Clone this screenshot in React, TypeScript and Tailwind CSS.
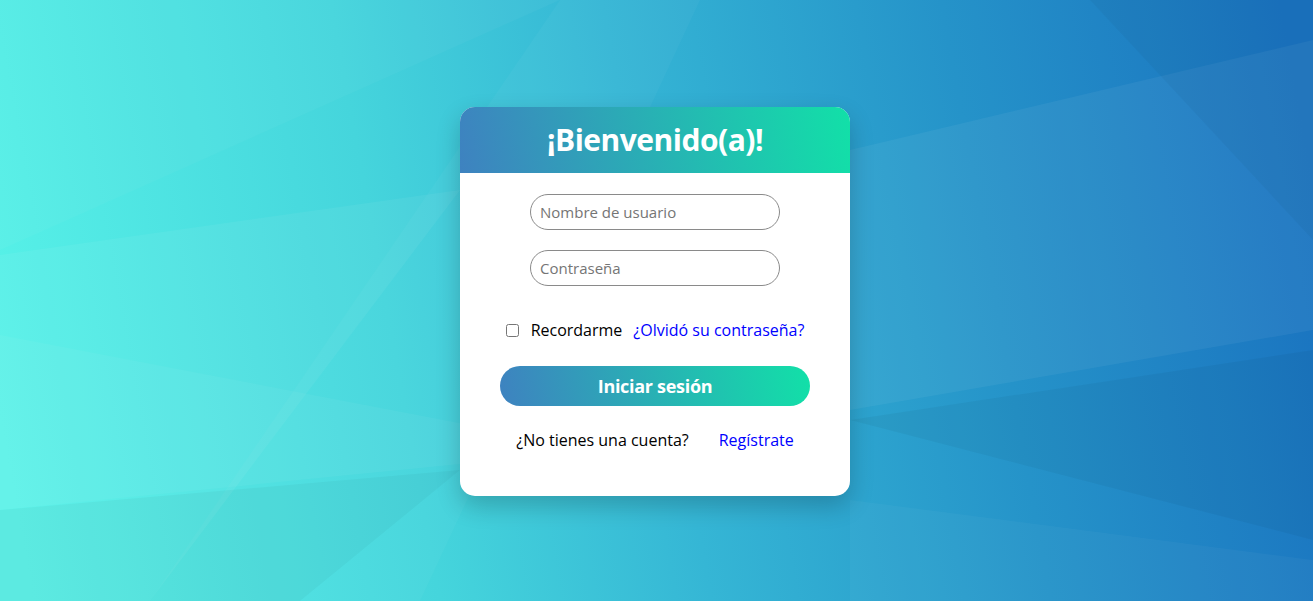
import React from "react";

function Background() {
  return (
    <svg
      className="absolute inset-0 w-full h-full"
      viewBox="0 0 1313 601"
      preserveAspectRatio="none"
    >
      <defs>
        <linearGradient id="bg" gradientUnits="userSpaceOnUse" x1="0" y1="420" x2="1313" y2="180">
          <stop offset="0" stopColor="#57f2e8" />
          <stop offset="0.3" stopColor="#45d5dc" />
          <stop offset="0.5" stopColor="#35b6d5" />
          <stop offset="0.75" stopColor="#2593c9" />
          <stop offset="1" stopColor="#1a73c0" />
        </linearGradient>
      </defs>
      <rect x="0" y="0" width="1313" height="601" fill="url(#bg)" />
      <polygon points="0,0 560,0 0,250" fill="#ffffff" opacity="0.03" />
      <polygon points="0,255 460,190 150,601 0,601" fill="#ffffff" opacity="0.05" />
      <polygon points="0,335 600,450 0,510" fill="#ffffff" opacity="0.04" />
      <polygon points="560,0 700,0 420,601 150,601" fill="#ffffff" opacity="0.03" />
      <polygon points="850,150 1313,40 1313,330 850,410" fill="#ffffff" opacity="0.05" />
      <polygon points="1090,0 1313,0 1313,240" fill="#000000" opacity="0.03" />
      <polygon points="850,420 1313,350 1313,540" fill="#000000" opacity="0.04" />
      <polygon points="0,510 460,470 300,601 0,601" fill="#000000" opacity="0.03" />
      <polygon points="850,500 1313,560 1313,601 850,601" fill="#ffffff" opacity="0.03" />
    </svg>
  );
}

export default function App() {
  return (
    <div
      className="relative w-full h-[601px] overflow-hidden flex justify-center pr-[3px]"
      style={{ fontFamily: '"Open Sans", "Noto Sans", sans-serif' }}
    >
      <Background />
      <div className="relative mt-[107px] w-[390px] h-[389px] bg-white rounded-[15px] overflow-hidden shadow-[0_10px_25px_rgba(0,0,0,0.2)] flex flex-col">
        <div className="h-[66px] bg-[linear-gradient(80deg,#3e82c0,#12e0a8)] flex items-center justify-center">
          <h1 className="text-white font-bold text-[30px] tracking-[-0.5px] leading-none">
            ¡Bienvenido(a)!
          </h1>
        </div>
        <div className="flex flex-col items-center pt-[21px]">
          <input
            className="w-[250px] h-[36px] rounded-full border border-[#8a8a8a] px-[9px] text-[15px] placeholder:text-[#757575] outline-none"
            placeholder="Nombre de usuario"
          />
          <input
            className="mt-[20px] w-[250px] h-[36px] rounded-full border border-[#8a8a8a] px-[9px] text-[15px] placeholder:text-[#757575] outline-none"
            placeholder="Contraseña"
          />
          <div className="mt-[33px] flex items-center text-[16px] text-black h-[22px]">
            <input type="checkbox" className="w-[13px] h-[13px] mr-[12px]" />
            <span>Recordarme</span>
            <a className="ml-[11px] text-[#0000ff]">¿Olvidó su contraseña?</a>
          </div>
          <button className="mt-[25px] w-[310px] h-[40px] rounded-full bg-[linear-gradient(80deg,#3e82c0,#12e0a8)] text-white font-bold text-[18px] tracking-[-0.3px]">
            Iniciar sesión
          </button>
          <div className="mt-[23px] flex items-center text-[16px] h-[22px]">
            <span className="text-black">¿No tienes una cuenta?</span>
            <a className="ml-[30px] text-[#0000ff]">Regístrate</a>
          </div>
        </div>
      </div>
    </div>
  );
}
